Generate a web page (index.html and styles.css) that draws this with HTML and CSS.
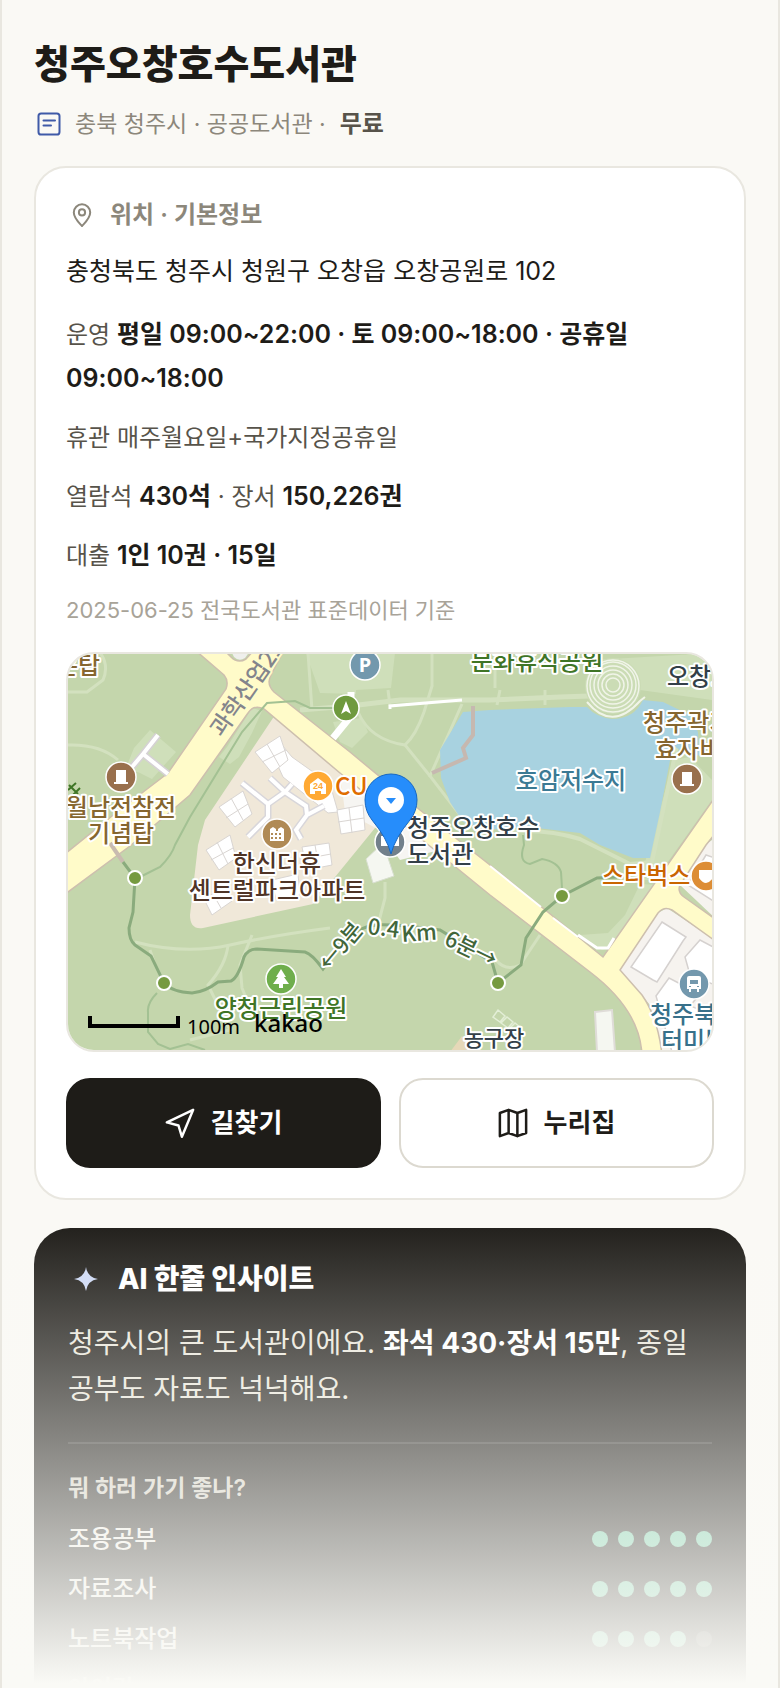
FILE: index.html
```html
<!DOCTYPE html>
<html lang="ko">
<head>
<meta charset="utf-8">
<meta name="viewport" content="width=device-width, initial-scale=1">
<title>청주오창호수도서관</title>
<link rel="stylesheet" href="styles.css">
</head>
<body>
<main class="app">
  <header class="head">
    <h1 class="title">청주오창호수도서관</h1>
    <p class="meta">
      <svg class="icon blue" viewBox="0 0 24 24" aria-hidden="true"><rect x="1.500" y="1.500" width="21" height="21" rx="2.600"/><path d="M6.500 8.400H18M6.500 13.400H14"/></svg>
      <span>충북 청주시 · 공공도서관 ·</span><strong class="fee">무료</strong>
    </p>
  </header>

  <section class="card">
    <h2 class="card-title">
      <svg class="icon" viewBox="0 0 24 24" aria-hidden="true"><path d="M12 23C8.500 19.200 3.800 15 3.800 9.500a8.200 8.200 0 0 1 16.400 0C20.200 15 15.500 19.200 12 23Z"/><circle cx="12" cy="9.400" r="3.100"/></svg>
      위치 · 기본정보
    </h2>
    <p class="address">충청북도 청주시 청원구 오창읍 오창공원로 102</p>
    <div class="facts">
      <p>운영 <strong>평일 09:00~22:00 · 토 09:00~18:00 · 공휴일 09:00~18:00</strong></p>
      <p>휴관 매주월요일+국가지정공휴일</p>
      <p>열람석 <strong>430석</strong> · 장서 <strong>150,226권</strong></p>
      <p>대출 <strong>1인 10권 · 15일</strong></p>
    </div>
    <p class="source">2025-06-25 전국도서관 표준데이터 기준</p>

    <div class="map">
      <svg viewBox="68 654 644 396" preserveAspectRatio="xMidYMid slice" role="img" aria-label="도서관 주변 지도">
        <rect x="60" y="645" width="660" height="415" fill="#c4d6ac"/>

        <!-- lawns -->
        <g fill="#cfdfba">
          <path d="M306 653H395L391 688 356 690V694L320 693Z"/>
          <path d="M150 730 176 752 152 779 140 773 126 768 134 748Z"/>
          <path d="M227 747 252 708 262 711 252 733 239 757 230 764 219 757Z"/>
          <path d="M333 722 362 718 368 732 352 748 340 742Z"/>
          <path d="M594 660 712 653V700L640 690Z"/>
          <path d="M674 760 690 757 712 780V800L655 880 640 880Z"/>
          <path d="M640 884 625 915 608 933 580 935 602 950 618 947 660 885Z"/>
        </g>
        <g fill="none" stroke="#d3e1bf" stroke-width="5">
          <path d="M300 710 350 706 400 700 490 700 560 697 620 695"/>
          <path d="M432 653V686L424 712Q416 735 405 745L430 776" stroke-width="3"/>
          <path d="M358 712Q370 740 405 745M462 704 430 776 470 828" stroke-width="3"/>
          <path d="M308 653 312 710M388 690 390 706M500 690 497 705M545 690V705M495 655V688" stroke-width="3"/>
          <path d="M68 692H87L103 680Q110 664 98 650M68 745Q100 744 118 760" stroke-width="3"/>
          <path d="M385 882V898L378 925M135 942Q185 955 230 945T330 928" stroke-width="3"/>
          <path d="M228 945Q226 965 208 985L230 1030 190 1040M252 935 240 965 242 988 255 1020" stroke-width="3"/>
          <path d="M150 950 154 962M540 935 520 965Q506 972 496 960" stroke-width="3"/>
          <path d="M503 832Q545 828 580 839L630 864 652 862 676 750 690 710" stroke-width="4"/>
        </g>

        <!-- lake -->
        <path d="M463 712 440 750 441 778 450 802 463 822 490 830 503 828 537 828 580 833 600 845 633 858H650L660 812 673 745 690 758 699 755 698 732 690 715 663 702 643 700Q634 719 612 719 596 717 587 707L570 707 490 710Z" fill="#a8d2e0"/>
        <path d="M473 706V735L463 748 466 758 432 773" fill="none" stroke="#c6b8b0" stroke-width="4"/>

        <!-- amphitheatre -->
        <circle cx="613" cy="686" r="28" fill="#cbdcb5"/>
        <g fill="none" stroke="#f0f4e8" stroke-width="1.500">
          <circle cx="613" cy="685" r="7"/><circle cx="613" cy="685" r="11"/><circle cx="613" cy="685" r="15"/>
          <circle cx="613" cy="685" r="19"/><circle cx="613" cy="685" r="23"/><circle cx="613" cy="686" r="26"/>
          <path d="M587 702Q612 732 640 701L645 697" stroke-width="2"/>
        </g>

        <!-- apartment block -->
        <path d="M273 718 205 820 198 845 190 915Q190 930 203 928L313 904 375 828 405 822 350 775 280 716Z" fill="#f0e8d9"/>
        <path d="M340 772 410 826 440 850 400 860 376 828 345 812Z" fill="#f6f5f2"/>
        <g fill="#fff" stroke="#d9d5d2" stroke-width="1">
          <path d="M282 745 292 757 330 784 338 812 328 813 283 777 278 766Z"/>
          <path d="M255 752 280 736 288 760 272 773Z"/><path d="M219 807 243 791 252 814 235 827Z"/>
          <path d="M206 850 230 835 236 858 219 870Z"/><path d="M204 899 222 888 232 901 212 915Z"/>
          <path d="M337 810 363 805 365 830 341 834Z"/><path d="M302 847 329 843 332 865 307 870Z"/>
          <path d="M272 880 298 874 300 895 276 900Z"/>
          <path d="M267 744 280 767M262 762 286 750M231 798 243 820M226 818 248 804M217 842 228 864M211 860 233 848M349 808 352 833M338 822 364 818M315 845 319 868M304 859 331 854M213 894 221 908"/>
        </g>
        <g fill="none" stroke="#d8d6da" stroke-width="7"><path d="M242 783 268 804V817L248 837M270 778 285 792 268 804M292 784 285 792 306 806 307 815 296 830 301 839M307 815 324 806"/></g>
        <g fill="none" stroke="#fff" stroke-width="4"><path d="M242 783 268 804V817L248 837M270 778 285 792 268 804M292 784 285 792 306 806 307 815 296 830 301 839M307 815 324 806"/></g>

        <!-- terminal district -->
        <path d="M620 970 658 913 667 908 715 940V1052H662L650 1005Z" fill="#f6f3ef"/>
        <path d="M680 885 705 845 715 838V918Z" fill="#f6f3ef"/>
        <g fill="#fff" stroke="#d5d1cf" stroke-width="1.500">
          <path d="M662 922 686 937 683 941 657 982 653 980 631 967Z"/>
          <path d="M685 957 700 940 715 948V985L690 975Z"/>
          <path d="M656 996 669 978 700 994 690 1006 715 1015V1052H672Z"/>
          <path d="M688 885 706 855 715 858V902Z"/>
        </g>

        <!-- roads -->
        <g fill="#fffbc9" stroke="#cdbfae" stroke-width="1.500">
          <path d="M195 650 224 675Q229 681 226 689L168 773 117 812 60 858V898L130 846 190 795 248 713Q254 704 264 709L340 773 490 895 590 972Q640 1010 642 1055H662Q658 1018 642 995L620 970 658 913Q664 906 672 910L718 943V921L684 897Q677 892 680 885L706 845 718 830V793L603 957 490 865 420 810 350 752 274 692Q266 684 271 675L285 648H256L246 659Q238 664 231 657L222 648Z"/>
        </g>
        <path d="M231 651H250L245 658Q239 662 234 657Z" fill="#efefec"/>
        <g stroke="#d5d1d4" stroke-width="7" fill="none"><path d="M158 735 143 754 132 767M143 754 168 774"/></g>
        <g stroke="#fff" stroke-width="4" fill="none">
          <path d="M158 735 143 754 132 767M143 754 168 774"/>
          <path d="M351 692V716L333 738" stroke-width="7"/>
          <path d="M390 709V706L462 700" stroke-width="3"/>
          <path d="M578 935 597 948 608 948 614 938" stroke-width="3"/>
          <path d="M553 918 578 937M490 866 541 907" stroke-width="2"/>
        </g>
        <path d="M366 859 383 843 394 876 373 883Z" fill="#f5f7f1" stroke="#d8dfd0"/>
        <path d="M595 1012 612 1010 615 1052H597Z" fill="#f5f7f1" stroke="#dfdcd8" stroke-width="2"/>
        <path d="M450 1052 462 1036 475 1052Z" fill="#e6d8b8"/>
        <g fill="none" stroke="#e3eed6" stroke-width="1.500"><path d="M498 1010 505 1016 500 1022 493 1017ZM507 1017 513 1022 508 1028 501 1023ZM515 1023 521 1028 516 1034 509 1029Z"/></g>

        <!-- trails -->
        <g fill="none" stroke="#a3c193" stroke-width="2">
          <path d="M140 877 160 867Q172 855 175 845L190 817 242 732 267 703 295 701 310 708H333"/>
          <path d="M562 888 561 872Q558 862 542 859L530 864Q518 862 524 845L523 835"/>
          <path d="M157 993Q147 1003 148 1012V1032L158 1044 170 1049 188 1044 205 1050"/>
        </g>
        <path d="M110 843 123 862" stroke="#c9bbb0" stroke-width="4"/>
        <path d="M123 862 135 878 133 912 129 928Q129 940 135 945L151 956 164 983Q172 992 192 993 205 992 218 982L231 981Q238 978 244 957 248 949 257 949L305 952Q312 954 323 969L345 940Q360 926 377 925T440 930L492 962 498 983 521 965 526 938 543 912 562 896 597 878 617 877" fill="none" stroke="#8aab7d" stroke-width="3"/>
        <g fill="#769a40" stroke="#fff" stroke-width="2"><circle cx="135" cy="878" r="7"/><circle cx="164" cy="983" r="7"/><circle cx="498" cy="983" r="7"/><circle cx="562" cy="896" r="7"/></g>

        <!-- place markers -->
        <g stroke="#fff" stroke-width="1.500">
          <circle cx="121" cy="777" r="15" fill="#99704d"/><circle cx="687" cy="779" r="15" fill="#99704d"/>
          <circle cx="365" cy="665" r="15" fill="#7398ad"/><circle cx="346" cy="708" r="13" fill="#6f9a3e"/>
          <circle cx="318" cy="786" r="15" fill="#ffa933"/><circle cx="277" cy="834" r="15" fill="#b08a55"/>
          <circle cx="390" cy="842" r="15" fill="#72808b"/><circle cx="281" cy="979" r="15" fill="#6fae4c"/>
          <circle cx="706" cy="876" r="15" fill="#dd8d35"/><circle cx="694" cy="984" r="15" fill="#7398ad"/>
        </g>
        <g fill="#fff">
          <path d="M116 770H126V782H128V784H114V782H116ZM682 772H692V784H694V786H680V784H682Z"/>
          <path d="M346 701 351 714 346 711 341 714Z"/>
          <path d="M310 794V784L318 778 326 784V794H321V791H315V794Z"/>
          <path d="M281 969 286 977H284L289 984H283V988H279V984H273L278 977H276Z"/>
          <path d="M699 870H713V878Q706 888 699 878Z"/>
          <path d="M381 836H388V846H381ZM392 836H399V846H392Z"/>
          <path fill-rule="evenodd" d="M270 831H284V841H270ZM271 833V835H273V833ZM275 833V835H277V833ZM279 833V835H281V833ZM271 837V839H273V837ZM275 837V839H277V837ZM279 837V839H281V837Z"/>
          <path d="M270 832V829L273 827 276 829V832ZM278 832V829L281 827 284 829V832Z"/>
          <path fill-rule="evenodd" d="M689 976H699Q701 976 701 978V989H699V992H697V989H691V992H689V989H687V978Q687 976 689 976ZM690 980V984H698V980ZM689 986V987H691V986ZM697 986V987H699V986Z"/>
        </g>
        <text class="parking" x="365" y="672" text-anchor="middle">P</text>
        <text class="tiny" x="318" y="789" text-anchor="middle">24</text>

        <!-- place names -->
        <g class="label">
          <text class="road" transform="translate(222 738) rotate(-55)">과학산업2로</text>
          <text class="brown" x="56" y="674">은탑</text>
          <path d="M68 790 76 783M72 796 80 788M69 785 78 794" fill="none" stroke="#3f7526" stroke-width="2"/>
          <text class="brown" x="121" y="816" text-anchor="middle">월남전참전</text>
          <text class="brown" x="121" y="842" text-anchor="middle">기념탑</text>
          <text class="green" x="537" y="670" text-anchor="middle">문화휴식공원</text>
          <text class="slate" x="667" y="685">오창호</text>
          <text class="brown" x="643" y="731">청주곽기</text>
          <text class="brown" x="655" y="758">효자비</text>
          <text class="water" x="571" y="789" text-anchor="middle">호암저수지</text>
          <text class="slate" x="407" y="836">청주오창호수</text>
          <text class="slate" x="407" y="863">도서관</text>
          <text class="orange" x="335" y="795">CU</text>
          <text class="coffee" x="602" y="884">스타벅스</text>
          <text class="umber" x="277" y="872" text-anchor="middle">한신더휴</text>
          <text class="umber" x="277" y="899" text-anchor="middle">센트럴파크아파트</text>
          <text class="green" x="281" y="1017" text-anchor="middle">양청근린공원</text>
          <text class="navy" x="650" y="1023">청주북</text>
          <text class="navy" x="661" y="1049">터미널</text>
          <text class="slate small" x="494" y="1046" text-anchor="middle">농구장</text>
          <text class="walk" transform="translate(329 972) rotate(-50)">←9분</text>
          <text class="walk" transform="translate(367 934) rotate(7)">0.4</text>
          <text class="walk" transform="translate(402 942) rotate(-4)">Km</text>
          <text class="walk" transform="translate(443 944) rotate(26)">6분→</text>
        </g>

        <!-- selected place -->
        <path d="M391 854Q387 838 372 820 365 811 365 800A26 26 0 0 1 417 800Q417 811 410 820 395 838 391 854Z" fill="#268dfb" stroke="#1668c4"/>
        <circle cx="391" cy="800" r="13" fill="#fff"/>
        <path d="M386 798H396L391 804Z" fill="#268dfb"/>

        <path d="M90 1016V1026H178V1016" fill="none" stroke="#000" stroke-width="4"/>
        <text class="scale" x="187" y="1034">100m</text>
        <text class="brand" x="254" y="1032">kakao</text>
      </svg>
    </div>

    <div class="actions">
      <button class="btn primary" type="button">
        <svg class="icon" viewBox="0 0 24 24" aria-hidden="true"><path d="M22.500 1.500 1.500 11.500 10.800 14 13.500 23Z"/></svg>
        길찾기
      </button>
      <button class="btn" type="button">
        <svg class="icon" viewBox="0 0 24 24" aria-hidden="true"><path d="M1.500 4 8.500 1.500 15.500 4 22.500 1.500V20L15.500 22.500 8.500 20 1.500 22.500ZM8.500 1.500V20M15.500 4V22.500"/></svg>
        누리집
      </button>
    </div>
  </section>

  <section class="insight">
    <h2 class="insight-title">
      <svg class="spark" viewBox="0 0 24 24" aria-hidden="true"><path d="M12 0Q13.500 10.500 24 12 13.500 13.500 12 24 10.500 13.500 0 12 10.500 10.500 12 0Z"/></svg>
      AI 한줄 인사이트
    </h2>
    <p class="summary">청주시의 큰 도서관이에요. <strong>좌석 430·장서 15만</strong>, 종일 공부도 자료도 넉넉해요.</p>
    <h3 class="question">뭐 하러 가기 좋나?</h3>
    <ul class="scores">
      <li>조용공부 <span class="dots"><i></i><i></i><i></i><i></i><i></i></span></li>
      <li>자료조사 <span class="dots"><i></i><i></i><i></i><i></i><i></i></span></li>
      <li>노트북작업 <span class="dots"><i></i><i></i><i></i><i></i><i class="off"></i></span></li>
      <li>아이랑 <span class="dots"><i></i><i></i><i></i><i></i><i class="off"></i></span></li>
    </ul>
  </section>
  <div class="fade"></div>
</main>
</body>
</html>
```
FILE: styles.css
```css
* { box-sizing: border-box; }

body {
  margin: 0;
  background: #faf9f5;
  color: #1e1c18;
  font-family: Inter, "Noto Sans CJK KR", sans-serif;
  font-size: 24px;
  line-height: 44px;
}

h1, h2, h3, p, ul { margin: 0; padding: 0; }

.app {
  position: relative;
  height: 100vh;
  overflow: hidden;
  padding: 36px 32px 0;
  border: solid #e9e7e0;
  border-width: 0 2px;
}

.icon {
  flex: none;
  width: 24px;
  height: 24px;
  fill: none;
  stroke: currentColor;
  stroke-width: 2;
  stroke-linecap: round;
  stroke-linejoin: round;
}

.icon.blue { color: #3f5aa8; }

.title {
  font-size: 39px;
  font-weight: 800;
  line-height: 56px;
}

.meta {
  display: flex;
  align-items: center;
  gap: 14px;
  margin-top: 10px;
  padding-left: 3px;
  color: #8c877b;
  font-size: 23px;
  line-height: 44px;
}

.fee {
  color: #57534a;
  font-size: 24px;
  font-weight: 600;
}

.card {
  margin-top: 20px;
  padding: 25px 30px 30px;
  border: 2px solid #e9e7e0;
  border-radius: 32px;
  background: #fff;
}

.card-title {
  display: flex;
  align-items: center;
  gap: 16px;
  padding-left: 4px;
  color: #8c877b;
  font-size: 24px;
  font-weight: 600;
  line-height: 44px;
}

.address {
  margin-top: 12px;
  font-size: 25px;
}

.facts {
  display: grid;
  gap: 15px;
  margin-top: 20px;
  color: #57534a;
}

.facts strong {
  color: #1e1c18;
  font-size: 25px;
  font-weight: 600;
  line-height: 24px;
}

.source {
  margin-top: 12px;
  color: #a8a398;
  font-size: 22px;
  line-height: 40px;
}

.map {
  margin-top: 22px;
  border: 2px solid #e9e7e0;
  border-radius: 28px;
  overflow: hidden;
}

.map svg {
  display: block;
  width: 100%;
}

.label text {
  font-family: "Noto Sans CJK KR", sans-serif;
  font-size: 24px;
  font-weight: 500;
  paint-order: stroke;
  stroke: #fff;
  stroke-width: 4px;
  stroke-linejoin: round;
}

.label .small { font-size: 22px; }
.label .road { fill: #83848c; font-size: 23px; stroke: #fffbc9; }
.label .walk { fill: #41663a; font-size: 22px; }
.brown { fill: #86662f; }
.green { fill: #3f7526; }
.slate { fill: #333f48; }
.water { fill: #3b7a94; }
.navy { fill: #37708a; }
.orange { fill: #e06d00; }
.coffee { fill: #c96500; }
.umber { fill: #4f3426; }

.parking { fill: #fff; font: 700 20px "Noto Sans", sans-serif; }
.tiny { fill: #ffa933; font: 700 9px "Liberation Sans", sans-serif; }
.scale { font: 400 20px "Noto Sans", sans-serif; }
.brand { font: 500 24px "Noto Sans", sans-serif; }

.actions {
  display: grid;
  grid-template-columns: 1fr 1fr;
  gap: 18px;
  margin-top: 26px;
}

.btn {
  display: flex;
  align-items: center;
  justify-content: center;
  gap: 16px;
  height: 90px;
  border: 2px solid #dcd9d0;
  border-radius: 24px;
  background: #fff;
  color: #1e1c18;
  font: inherit;
  font-size: 26px;
  font-weight: 600;
}

.btn .icon {
  width: 30px;
  height: 30px;
}

.btn.primary {
  border-color: #1e1c18;
  background: #1e1c18;
  color: #fff;
}

.insight {
  margin-top: 28px;
  padding: 28px 34px;
  border-radius: 36px;
  background: #1e1c18;
  color: #fff;
}

.insight-title {
  display: flex;
  align-items: center;
  gap: 20px;
  padding-left: 6px;
  font-size: 28px;
  font-weight: 800;
  line-height: 46px;
}

.spark {
  width: 24px;
  height: 24px;
  fill: #ccd8f5;
}

.summary {
  margin-top: 18px;
  padding-bottom: 30px;
  border-bottom: 2px solid rgba(255, 255, 255, 0.12);
  color: #e9e6db;
  font-size: 28px;
  line-height: 46px;
}

.summary strong {
  color: #fff;
  font-weight: 700;
}

.question {
  margin-top: 22px;
  color: #d3cfc3;
  font-size: 23px;
  font-weight: 600;
}

.scores {
  margin-top: 4px;
  list-style: none;
  color: #f1efe8;
  font-weight: 500;
  line-height: 50px;
}

.scores li {
  display: flex;
  align-items: center;
  justify-content: space-between;
}

.dots {
  display: flex;
  gap: 10px;
}

.dots i {
  width: 16px;
  height: 16px;
  border-radius: 50%;
  background: #6cc9a2;
}

.dots .off { background: #4a4843; }

.fade {
  position: absolute;
  right: 0;
  bottom: 0;
  left: 0;
  height: 472px;
  background: linear-gradient(rgba(250, 250, 246, 0), #fafaf6 99%);
}
```
